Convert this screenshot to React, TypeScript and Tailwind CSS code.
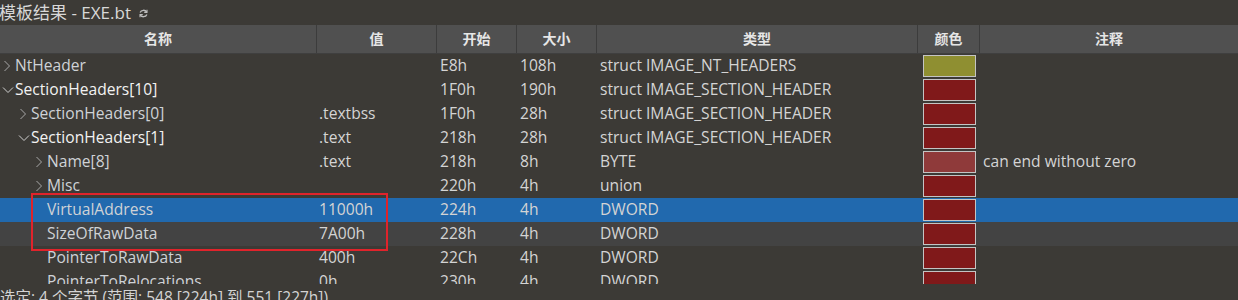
import React from "react";

type Row = {
  name: string;
  level: number;
  chev: "r" | "d" | null;
  bright?: boolean;
  value: string;
  start: string;
  size: string;
  type: string;
  color: string;
  comment?: string;
  bg?: string;
};

const rows: Row[] = [
  { name: "NtHeader", level: 0, chev: "r", value: "", start: "E8h", size: "108h", type: "struct IMAGE_NT_HEADERS", color: "bg-[#8f8f31]" },
  { name: "SectionHeaders[10]", level: 0, chev: "d", bright: true, value: "", start: "1F0h", size: "190h", type: "struct IMAGE_SECTION_HEADER", color: "bg-[#80191a]" },
  { name: "SectionHeaders[0]", level: 1, chev: "r", value: ".textbss", start: "1F0h", size: "28h", type: "struct IMAGE_SECTION_HEADER", color: "bg-[#80191a]" },
  { name: "SectionHeaders[1]", level: 1, chev: "d", bright: true, value: ".text", start: "218h", size: "28h", type: "struct IMAGE_SECTION_HEADER", color: "bg-[#80191a]" },
  { name: "Name[8]", level: 2, chev: "r", value: ".text", start: "218h", size: "8h", type: "BYTE", color: "bg-[#8f3a3a]", comment: "can end without zero" },
  { name: "Misc", level: 2, chev: "r", value: "", start: "220h", size: "4h", type: "union", color: "bg-[#80191a]" },
  { name: "VirtualAddress", level: 2, chev: null, value: "11000h", start: "224h", size: "4h", type: "DWORD", color: "bg-[#80191a]", bg: "bg-[#2169ae]" },
  { name: "SizeOfRawData", level: 2, chev: null, value: "7A00h", start: "228h", size: "4h", type: "DWORD", color: "bg-[#80191a]", bg: "bg-[#434343]" },
  { name: "PointerToRawData", level: 2, chev: null, value: "400h", start: "22Ch", size: "4h", type: "DWORD", color: "bg-[#80191a]" },
  { name: "PointerToRelocations", level: 2, chev: null, value: "0h", start: "230h", size: "4h", type: "DWORD", color: "bg-[#80191a]" },
];

const indentCls = ["pl-[2px]", "pl-[18px]", "pl-[34px]"];

function Chevron({ dir }: { dir: "r" | "d" }) {
  return (
    <svg width="13" height="12" viewBox="0 0 13 12" className="shrink-0">
      {dir === "r" ? (
        <path d="M2.5 1 L7.5 6 L2.5 11" fill="none" stroke="#a8a8a8" strokeWidth="1" />
      ) : (
        <path d="M1 3.5 L6 8.5 L11 3.5" fill="none" stroke="#d0d0d0" strokeWidth="1" />
      )}
    </svg>
  );
}

export default function App() {
  const font = { fontFamily: '"Open Sans", "Noto Sans CJK SC", sans-serif' };
  return (
    <div className="w-[1238px] h-[300px] overflow-hidden bg-[#3c3a36] text-[#d4d4d4] flex flex-col" style={font}>
      <div className="h-[25px] shrink-0 flex items-center gap-[7px] text-[17px] text-[#d8d8d8] leading-none">
        <span className="-ml-[1px]">模板结果 - EXE.bt</span>
        <svg width="11" height="11" viewBox="0 0 12 12" className="mt-[2px]">
          <path d="M9.5 4.5 A4 4 0 0 0 2.3 5" fill="none" stroke="#bdbdbd" strokeWidth="1.4" />
          <path d="M2.5 7.5 A4 4 0 0 0 9.7 7" fill="none" stroke="#bdbdbd" strokeWidth="1.4" />
          <path d="M9.8 1.8 L9.8 4.8 L6.8 4.8" fill="none" stroke="#bdbdbd" strokeWidth="1.2" />
          <path d="M2.2 10.2 L2.2 7.2 L5.2 7.2" fill="none" stroke="#bdbdbd" strokeWidth="1.2" />
        </svg>
      </div>
      <div className="h-[29px] shrink-0 flex bg-[#505050] text-[14px] font-bold text-[#e6e6e6] leading-none border-b border-[#3f3f3f]">
        <div className="w-[317px] flex items-center justify-center border-r border-[#3c3c3c]">名称</div>
        <div className="w-[120px] flex items-center justify-center border-r border-[#3c3c3c]">值</div>
        <div className="w-[80px] flex items-center justify-center border-r border-[#3c3c3c]">开始</div>
        <div className="w-[80px] flex items-center justify-center border-r border-[#3c3c3c]">大小</div>
        <div className="w-[321px] flex items-center justify-center border-r border-[#3c3c3c]">类型</div>
        <div className="w-[62px] flex items-center justify-center border-r border-[#3c3c3c]">颜色</div>
        <div className="flex-1 flex items-center justify-center">注释</div>
      </div>
      <div className="relative h-[230px] shrink-0 overflow-hidden">
        {rows.map((r, i) => (
          <div key={i} className={`h-[24px] flex items-center text-[15.6px] leading-none ${r.bg ?? ""}`}>
            <div className={`w-[317px] flex items-center ${indentCls[r.level]} ${r.bright ? "text-[#f2f2f2]" : "text-[#cfd2d6]"}`}>
              <div className="w-[13px] flex items-center">{r.chev && <Chevron dir={r.chev} />}</div>
              <span className="-mt-[1px]">{r.name}</span>
            </div>
            <div className="w-[120px] pl-[2px]">{r.value}</div>
            <div className="w-[80px] pl-[3px]">{r.start}</div>
            <div className="w-[80px] pl-[3px]">{r.size}</div>
            <div className="w-[321px] pl-[3px]">{r.type}</div>
            <div className="w-[62px] h-full flex items-center pl-[5px]">
              <div className={`w-[53px] h-[22px] border border-[#c4c4c4] ${r.color}`} />
            </div>
            <div className="flex-1 pl-[3px]">{r.comment ?? ""}</div>
          </div>
        ))}
        <div className="absolute left-[31px] top-[139px] w-[357px] h-[58px] border-2 border-[#e0232b]" />
      </div>
      <div className="flex-1 min-h-0 overflow-hidden pt-[6px] text-[15.5px] leading-none text-[#d4d4d4] whitespace-nowrap">
        选定: 4 个字节 (范围: 548 [224h] 到 551 [227h])
      </div>
    </div>
  );
}
